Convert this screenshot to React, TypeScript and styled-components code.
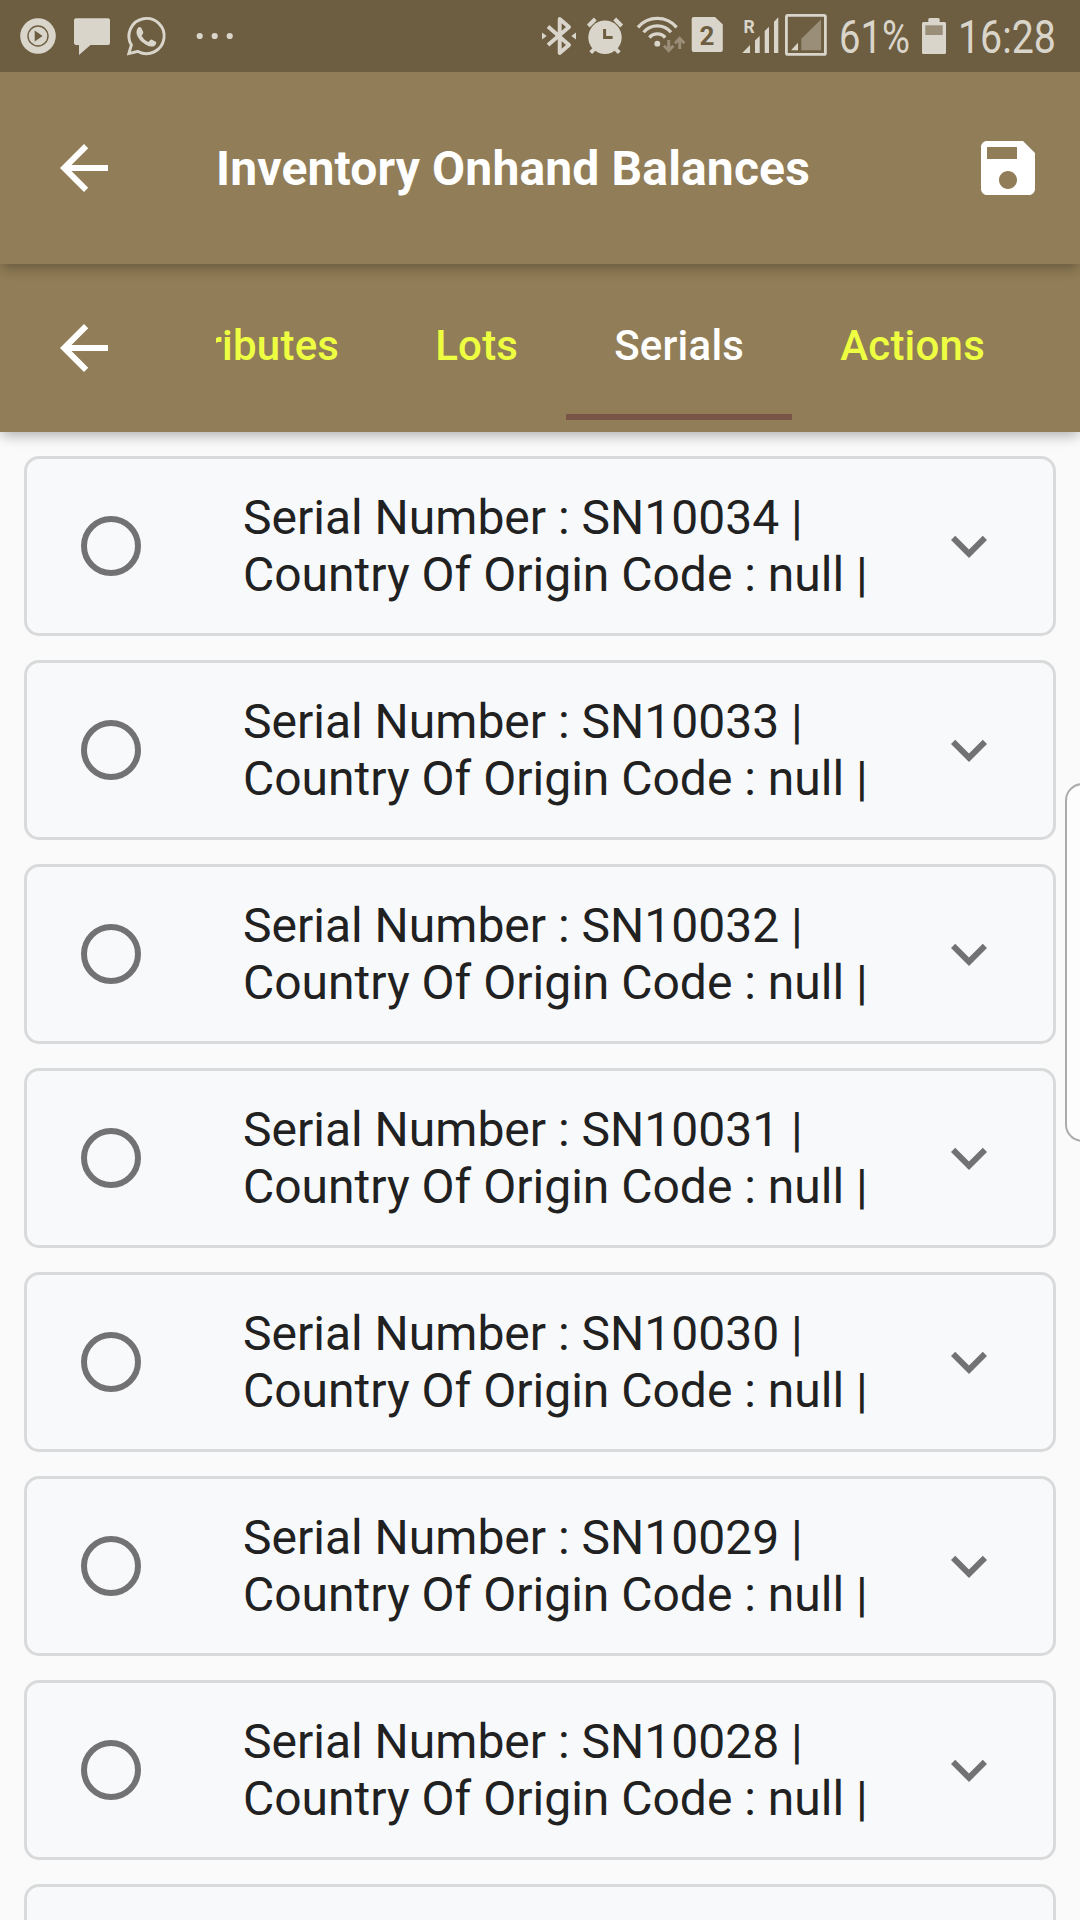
import React from "react";
import styled, { createGlobalStyle } from "styled-components";

const GlobalStyle = createGlobalStyle`
  * { box-sizing: border-box; }
  html, body { margin: 0; padding: 0; background: #fafafa; }
`;

const INK = "#dad5cb";
const DIM = "#9a8e78";
const BAR = "#6d5e41";

const Screen = styled.div`
  position: relative;
  display: flex;
  flex-direction: column;
  width: 1080px;
  height: 1920px;
  overflow: hidden;
  background: #fafafa;
  font-family: Roboto, "Liberation Sans", sans-serif;
`;

const StatusBar = styled.div`
  display: flex;
  flex: none;
  justify-content: space-between;
  height: 72px;
  padding: 0 24px 0 18px;
  background: ${BAR};
  z-index: 3;
`;

const StatusGroup = styled.div`
  display: flex;
  align-items: center;
`;

const StatusIcon = styled.svg`
  display: block;
  flex: none;
  height: 72px;
`;

const StatusText = styled.div<{ $width: number; $stretch: number }>`
  width: ${(p) => p.$width}px;
  font-size: 46px;
  line-height: 72px;
  padding-top: 2px;
  color: ${INK};
  white-space: nowrap;
  transform: scaleX(${(p) => p.$stretch});
  transform-origin: left center;
`;

const Toolbar = styled.header<{ $height: number; $layer: number }>`
  display: flex;
  flex: none;
  align-items: center;
  height: ${(p) => p.$height}px;
  padding: 0 36px 0 48px;
  background: #917d57;
  box-shadow: 0 6px 12px -3px rgba(0, 0, 0, 0.2), 0 3px 15px rgba(0, 0, 0, 0.14);
  z-index: ${(p) => p.$layer};
`;

const IconButton = styled.button`
  display: flex;
  flex: none;
  width: 72px;
  height: 72px;
  padding: 0;
  border: 0;
  background: none;
  color: #fff;
`;

const Glyph = styled.svg`
  width: 72px;
  height: 72px;
  fill: currentColor;
`;

const Title = styled.h1`
  flex: 1;
  margin: 0 0 0 96px;
  font-size: 48px;
  font-weight: 700;
  line-height: 57px;
  letter-spacing: 0.15px;
  color: #fff;
  white-space: nowrap;
`;

const TabStrip = styled.nav`
  display: flex;
  flex: 1;
  justify-content: flex-end;
  height: 144px;
  margin-left: 96px;
  margin-right: 11px;
  overflow: hidden;
`;

const Tab = styled.div<{ $active?: boolean }>`
  flex: none;
  height: 144px;
  padding: 1px 48px 0;
  border-bottom: 6px solid ${(p) => (p.$active ? "#795548" : "transparent")};
  font-size: 42px;
  font-weight: 500;
  line-height: 138px;
  letter-spacing: 0.22px;
  color: ${(p) => (p.$active ? "#fff" : "#eeff41")};
  white-space: nowrap;
`;

const List = styled.main`
  display: flex;
  flex-direction: column;
  gap: 24px;
  padding: 24px;
`;

const Card = styled.article`
  display: flex;
  flex: none;
  align-items: center;
  height: 180px;
  padding: 0 48px 0 54px;
  border: 3px solid #d9dadb;
  border-radius: 15px;
  background: #f8f9fb;
`;

const Radio = styled.span`
  flex: none;
  width: 60px;
  height: 60px;
  border: 6px solid #727274;
  border-radius: 50%;
`;

const CardText = styled.div`
  flex: 1;
  margin-left: 102px;
  font-size: 48px;
  line-height: 57px;
  color: #212121;
  white-space: nowrap;
`;

const Expand = styled(IconButton)`
  color: #727274;
`;

const EdgeHandle = styled.div`
  position: absolute;
  top: 783px;
  right: -20px;
  width: 35px;
  height: 359px;
  border: 2px solid #ababab;
  border-radius: 20px;
  background: #fdfdfe;
`;

const BackIcon = () => (
  <Glyph viewBox="0 0 24 24">
    <path d="M20 11H7.83l5.59-5.59L12 4l-8 8 8 8 1.41-1.41L7.83 13H20v-2z" />
  </Glyph>
);

const SaveIcon = () => (
  <Glyph viewBox="0 0 24 24">
    <path d="M17 3H5c-1.11 0-2 .9-2 2v14c0 1.1.89 2 2 2h14c1.1 0 2-.9 2-2V7l-4-4zm-5 16c-1.66 0-3-1.34-3-3s1.34-3 3-3 3 1.34 3 3-1.34 3-3 3zm3-10H5V5h10v4z" />
  </Glyph>
);

const ExpandIcon = () => (
  <Glyph viewBox="0 0 24 24">
    <path d="M16.59 8.59L12 13.17 7.41 8.59 6 10l6 6 6-6z" />
  </Glyph>
);

const Notifications = () => (
  <StatusGroup>
    <StatusIcon width="50" viewBox="18 0 50 72">
      <circle cx="38" cy="36" r="17.8" fill={INK} />
      <circle cx="38" cy="36" r="10" fill="none" stroke={BAR} strokeWidth="1.4" />
      <path d="M34.7 30.6L42.6 36l-7.9 5.4z" fill={BAR} />
    </StatusIcon>
    <StatusIcon width="50" viewBox="68 0 50 72">
      <path d="M76 18.3h32a2 2 0 0 1 2 2V43a2 2 0 0 1-2 2H90.5L79 55V45h-3a2 2 0 0 1-2-2V20.300a2 2 0 0 1 2-2z" fill={INK} />
    </StatusIcon>
    <StatusIcon width="66" viewBox="118 0 66 72">
      <path d="M128.800 53.600l2.600-8.600a17.600 17.600 0 1 1 6.600 6.400z" fill="none" stroke={INK} strokeWidth="2.900" />
      <path d="M138.300 27.400c.8-.7 2.300-.7 2.900.3l2 4.300c.4 1-.2 2-1.700 3.500 1.400 3 3.900 5.300 7.100 6.500 1.300-1.600 2.200-2.800 3.300-2.300l4 2c.9.500 0 2.800-.9 3.700-3.700 2.800-8.500.3-12.200-2.800-3.800-3.300-7.200-8-6.100-12.200.3-1.200.9-2.200 1.600-3z" fill={INK} />
    </StatusIcon>
    <StatusIcon width="56" viewBox="184 0 56 72">
      <circle cx="199.700" cy="36" r="3.100" fill={INK} />
      <circle cx="214.700" cy="36" r="3.100" fill={INK} />
      <circle cx="229.700" cy="36" r="3.100" fill={INK} />
    </StatusIcon>
  </StatusGroup>
);

const SystemIndicators = () => (
  <StatusGroup>
    <StatusIcon width="44" viewBox="538 0 44 72">
      <path d="M548 26.500L569 45l-9.300 8V19l9.300 8-21 18" fill="none" stroke={INK} strokeWidth="3.900" strokeLinejoin="round" />
      <path d="M542 32.500l4.700 3.500-4.700 3.500zM576 32.500l-4.700 3.500 4.700 3.500z" fill={INK} />
    </StatusIcon>
    <StatusIcon width="52" viewBox="582 0 52 72">
      <circle cx="605" cy="37.300" r="16.700" fill={INK} />
      <path d="M588.300 26l7-7M621.700 26l-7-7M590.700 52.700l5-5M619.300 52.700l-5-5" stroke={INK} strokeWidth="4" />
      <path d="M604.600 29v8.500h8" fill="none" stroke={BAR} strokeWidth="3" />
    </StatusIcon>
    <StatusIcon width="54" viewBox="634 0 54 72">
      <circle cx="657.300" cy="43.700" r="2.900" fill={INK} />
      <path d="M638 27.400a25.300 25.300 0 0 1 38.600 0M643.600 32.200a18 18 0 0 1 27.400 0M649.400 37.600a10.400 10.400 0 0 1 15.800 0" fill="none" stroke={INK} strokeWidth="3.300" />
      <path d="M667.200 40h3v7l2.300-2.200 1.900 1.900-5.700 6-5.700-6 1.900-1.900 2.300 2.200zM678.200 49h3v-7l2.300 2.200 1.900-1.900-5.700-6-5.700 6 1.900 1.900 2.300-2.200z" fill={DIM} />
    </StatusIcon>
    <StatusIcon width="50" viewBox="688 0 50 72">
      <path d="M693.700 17H715l7.800 7.500V50a2 2 0 0 1-2 2h-27.100a2 2 0 0 1-2-2V19a2 2 0 0 1 2-2z" fill={INK} />
      <text x="707" y="45" textAnchor="middle" fontSize="26" fontWeight="700" fill={BAR}>2</text>
    </StatusIcon>
    <StatusIcon width="44" viewBox="738 0 44 72">
      <text x="743.500" y="32.500" fontSize="17.500" fontWeight="700" fill={INK}>R</text>
      <path d="M742.300 53H750v-8zM755 53h4.700V36l-4.700 4.600zM764.700 53h4.300V26.700l-4.300 4.400zM774 53h4.300V17.300l-4.300 4.400z" fill={INK} />
    </StatusIcon>
    <StatusIcon width="57" viewBox="782 0 57 72">
      <rect x="786.400" y="15.400" width="39" height="39" rx="1.500" fill="none" stroke={INK} strokeWidth="2.800" />
      <path d="M791 50.200h7v-7.400z" fill={INK} />
      <path d="M801.300 50.200V38.700L821 19.500v30.700z" fill={DIM} />
    </StatusIcon>
    <StatusText $width={77} $stretch={0.83}>61%</StatusText>
    <StatusIcon width="42" viewBox="916 0 42 72">
      <path d="M928.300 22v-2.500a1.500 1.500 0 0 1 1.500-1.500h8.400a1.500 1.500 0 0 1 1.500 1.500V22H944.500a1.500 1.500 0 0 1 1.500 1.500v29a1.500 1.500 0 0 1-1.500 1.500h-21a1.500 1.500 0 0 1-1.500-1.500v-29a1.500 1.500 0 0 1 1.500-1.500z" fill={INK} />
      <rect x="925.300" y="25.300" width="17.400" height="9.700" fill={DIM} />
    </StatusIcon>
    <StatusText $width={98} $stretch={0.855}>16:28</StatusText>
  </StatusGroup>
);

const tabs = ["Attributes", "Lots", "Serials", "Actions"];
const serials = ["SN10034", "SN10033", "SN10032", "SN10031", "SN10030", "SN10029", "SN10028", "SN10027"];

export default function App() {
  return (
    <>
      <GlobalStyle />
      <Screen>
        <StatusBar>
          <Notifications />
          <SystemIndicators />
        </StatusBar>
        <Toolbar $height={192} $layer={2}>
          <IconButton aria-label="Back"><BackIcon /></IconButton>
          <Title>Inventory Onhand Balances</Title>
          <IconButton aria-label="Save"><SaveIcon /></IconButton>
        </Toolbar>
        <Toolbar $height={168} $layer={1}>
          <IconButton aria-label="Back"><BackIcon /></IconButton>
          <TabStrip>
            {tabs.map((name) => (
              <Tab key={name} $active={name === "Serials"}>{name}</Tab>
            ))}
          </TabStrip>
        </Toolbar>
        <List>
          {serials.map((serial) => (
            <Card key={serial}>
              <Radio />
              <CardText>
                Serial Number : {serial} |<br />
                Country Of Origin Code : null |
              </CardText>
              <Expand aria-label="Expand"><ExpandIcon /></Expand>
            </Card>
          ))}
        </List>
        <EdgeHandle />
      </Screen>
    </>
  );
}
